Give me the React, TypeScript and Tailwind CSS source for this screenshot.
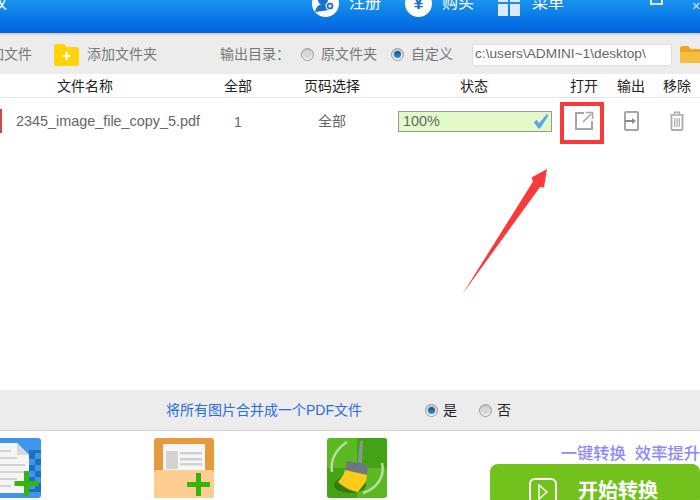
import React from 'react';

const FONT = 'font-["Liberation_Sans","Noto_Sans_CJK_SC",sans-serif]';

const Radio = ({ on }: { on?: boolean }) => (
  <span className="flex h-[13px] w-[13px] shrink-0 items-center justify-center rounded-full border border-[#9a9a9a] bg-gradient-to-b from-[#c4c4c4] to-[#f4f4f4]">
    {on ? <span className="h-[7px] w-[7px] rounded-full bg-gradient-to-b from-[#0d4f8c] to-[#2b9ad6]" /> : <span className="h-[7px] w-[7px] rounded-full bg-[#d6d6d6]" />}
  </span>
);

const TopItem = ({ icon, label }: { icon: React.ReactNode; label: string }) => (
  <div className="flex items-center gap-[10px]">
    {icon}
    <span className="text-[16px] leading-none text-white">{label}</span>
  </div>
);

const Circle = ({ children }: { children: React.ReactNode }) => (
  <span className="flex h-[27px] w-[27px] items-center justify-center rounded-full bg-white">{children}</span>
);

const OpenIcon = () => (
  <svg width="20" height="20" viewBox="0 0 20 20" fill="none" stroke="#a5a5a5" strokeWidth="2">
    <path d="M10 2H2v16h16v-8" />
    <path d="M9 11l8-8" strokeWidth="1.6" />
    <path d="M12 1.5h6.5V8" strokeWidth="1.6" />
  </svg>
);

const OutputIcon = () => (
  <svg width="15" height="20" viewBox="0 0 15 20" fill="none" stroke="#a5a5a5" strokeWidth="2">
    <rect x="1" y="1" width="13" height="18" rx="1" />
    <path d="M1 10h8" strokeWidth="2" stroke="#8a8a8a" />
    <path d="M8 7l4 3-4 3z" fill="#8a8a8a" stroke="none" />
  </svg>
);

const TrashIcon = () => (
  <svg width="16" height="20" viewBox="0 0 16 20" fill="none" stroke="#ababab" strokeWidth="1.5">
    <path d="M1 4h14M5.5 3.5V1.2h5v2.3" />
    <path d="M2.5 4.500v13.200c0 .8.5 1.300 1.300 1.300h8.400c.8 0 1.300-.5 1.300-1.300V4.500" strokeWidth="1.8" />
    <path d="M5.700 7v9M8 7v9M10.300 7v9" strokeWidth="1.200" />
  </svg>
);

const AddFileTile = () => (
  <svg width="60" height="60" viewBox="0 0 60 60" className="shrink-0">
    <rect width="60" height="60" rx="3" fill="#3f95ea" />
    <path d="M48 12h12v42H48z" fill="#1f6fc0" />
    <path d="M54 15h6v6h-6zM48 21h6v6h-6zM54 27h6v6h-6zM48 33h6v6h-6zM54 39h6v6h-6zM48 45h6v6h-6z" fill="#3f95ea" />
    <path d="M0 5h36l12 12v38H0z" fill="#f5f5f5" />
    <path d="M36 5l12 12H36z" fill="#d8d8d8" />
    <path d="M0 12h30v2H0zM0 19h36v2H0zM0 26h44v2H0zM0 33h44v2H0zM0 40h36v2H0zM0 47h30v2H0z" fill="#d2d2d2" />
    <path d="M33.500 43H43V33h5v10h9.500v5H48v10h-5V48h-9.500z" fill="#35b40a" />
  </svg>
);

const AddFolderTile = () => (
  <svg width="60" height="60" viewBox="0 0 60 60" className="shrink-0">
    <rect width="60" height="60" rx="3" fill="#e59a3d" />
    <rect x="9" y="6" width="42" height="30" fill="#f6f6f6" />
    <rect x="12" y="13" width="12" height="18" fill="#d2d2d2" />
    <path d="M26 14h22v2.500H26zM26 20h22v2.500H26zM26 25h22v2.500H26z" fill="#cfcfcf" />
    <path d="M0 35c0-2 1-3 3-3h54c2 0 3 1 3 3v22c0 2-1 3-3 3H3c-2 0-3-1-3-3z" fill="#fdcd92" />
    <path d="M33 44h9V35h5v9h9v5h-9v9h-5v-9h-9z" fill="#35b40a" />
  </svg>
);

const CleanTile = () => (
  <svg width="60" height="60" viewBox="0 0 60 60" className="shrink-0">
    <rect width="60" height="60" rx="3" fill="#5ab820" />
    <path d="M30 0h27c2 0 3 1 3 3v27H30z" fill="#44a315" />
    <path d="M0 30h30v30H3c-2 0-3-1-3-3z" fill="#44a315" />
    <path d="M20 4C9 11 3 22 5 34" stroke="#b9dca0" strokeWidth="2.500" fill="none" />
    <path d="M55 25c3 13-4 25-19 30" stroke="#b9dca0" strokeWidth="2.500" fill="none" />
    <ellipse cx="23" cy="47" rx="16" ry="8" fill="#357a12" />
    <path d="M33 4c1-2 3-2 3 0l-1 21-4-1z" fill="#8a93a0" />
    <path d="M20 23l21 4-1 10-22-5z" fill="#6f7680" />
    <path d="M18 32l22 5c0 3-1 6-2 8l-7 9c-7-1-15-5-20-10 3-3 6-7 7-12z" fill="#fbcb1c" />
  </svg>
);

export default function App() {
  return (
    <div className={`relative flex h-[500px] w-[700px] flex-col overflow-hidden bg-white ${FONT}`}>
      {/* title bar, top is cut off in the shot */}
      <div className="relative flex h-[33px] shrink-0 items-center justify-between overflow-hidden bg-gradient-to-b from-[#1a94ee] to-[#0560e0] pb-[27px]">
        <span className="ml-[-9px] text-[16px] leading-none text-white">权</span>
        <div className="mr-[136px] flex items-center gap-[24px]">
          <TopItem
            label="注册"
            icon={
              <Circle>
                <svg width="22" height="22" viewBox="0 0 22 22">
                  <circle cx="9" cy="8" r="5" fill="#1b6fd0" />
                  <path d="M1 20c1-6 5-8 8-8s6 2 7 6z" fill="#1b6fd0" />
                  <circle cx="16" cy="14" r="4" fill="#1b6fd0" stroke="#fff" />
                  <path d="M14 14h4M16 12v4" stroke="#fff" />
                </svg>
              </Circle>
            }
          />
          <TopItem
            label="购买"
            icon={
              <Circle>
                <span className="text-[18px] font-bold leading-none text-[#1b6fd0]">¥</span>
              </Circle>
            }
          />
          <TopItem
            label="菜单"
            icon={
              <span className="mr-[2px] grid h-[26px] w-[22px] grid-cols-2 gap-[2px]">
                <span className="bg-[#dce9fa]" />
                <span className="bg-[#dce9fa]" />
                <span className="bg-[#dce9fa]" />
                <span className="bg-[#dce9fa]" />
              </span>
            }
          />
        </div>
        <span className="absolute left-[650px] top-[-8px] h-[13px] w-[13px] border-2 border-[#dce9fa]" />
        <span className="absolute left-[692px] top-[-1px] text-[14px] leading-none text-[#dce9fa]">×</span>
      </div>
      <div className="h-[2px] shrink-0 bg-[#d6d6d6]" />

      {/* toolbar */}
      <div className="flex h-[39px] shrink-0 items-center bg-[#ececec] text-[14px] text-[#777]">
        <span className="ml-[-10px] w-[64px] shrink-0 whitespace-nowrap">加文件</span>
        <svg width="25" height="22" viewBox="0 0 25 22" className="shrink-0">
          <path d="M0 2c0-1 1-2 2-2h8l3 3h10c1 0 2 1 2 2v15c0 1-1 2-2 2H2c-1 0-2-1-2-2z" fill="#ffd30a" />
          <path d="M12.500 8v8M8.500 12h8" stroke="#fff" strokeWidth="2" />
        </svg>
        <span className="ml-[8px] w-[133px] shrink-0">添加文件夹</span>
        <span className="w-[81px] shrink-0">输出目录：</span>
        <Radio />
        <span className="ml-[7px] w-[70px] shrink-0">原文件夹</span>
        <Radio on />
        <span className="ml-[7px] w-[61px] shrink-0">自定义</span>
        <div className="flex h-[22px] w-[200px] shrink-0 items-center rounded-[2px] border border-[#dedede] bg-white pl-[2px] text-[13.700px] text-[#666]">
          c:\users\ADMINI~1\desktop\
        </div>
        <svg width="24" height="17" viewBox="0 0 24 17" className="ml-[8px] shrink-0">
          <path d="M0 2c0-1 1-2 2-2h6l3 3h13v14H0z" fill="#eda51f" />
          <path d="M0 6h24v11H0z" fill="#f6bd3f" />
        </svg>
      </div>

      {/* table header */}
      <div className="grid h-[23px] shrink-0 grid-cols-[196px_84px_104px_176px_48px_46px_46px] items-center text-center text-[14px] leading-none text-[#222]">
        <span className="pr-[26px]">文件名称</span>
        <span>全部</span>
        <span>页码选择</span>
        <span className="pl-[4px]">状态</span>
        <span>打开</span>
        <span>输出</span>
        <span>移除</span>
      </div>
      <div className="h-[1px] shrink-0 bg-[#e6e6e6]" />

      {/* file row */}
      <div className="grid h-[46px] shrink-0 grid-cols-[196px_84px_104px_176px_48px_46px_46px] items-center text-center text-[14px] text-[#666]">
        <div className="flex h-[24px] items-center">
          <span className="h-[24px] w-[2px] shrink-0 bg-[#d04a4a]" />
          <span className="ml-[14px] mt-[2px] whitespace-nowrap text-[14.400px]">2345_image_file_copy_5.pdf</span>
        </div>
        <span className="mt-[2px]">1</span>
        <span className="mt-[1px]">全部</span>
        <div className="ml-[14px] flex h-[21px] w-[154px] items-center justify-between border border-[#999] bg-[#e2fac8] pl-[4px] pr-[2px]">
          <span className="mt-[1px] text-[14.400px]">100%</span>
          <svg width="16" height="16" viewBox="0 0 18 17">
            <path d="M1 10l3-3 3 4L16 0l1 3-9 14h-2z" fill="#5aa4f2" />
          </svg>
        </div>
        <span className="flex justify-center"><OpenIcon /></span>
        <span className="flex justify-center"><OutputIcon /></span>
        <span className="flex justify-center"><TrashIcon /></span>
      </div>

      <div className="flex-1" />

      {/* merge option */}
      <div className="flex h-[40px] shrink-0 items-center bg-[#ececec] text-[14px]">
        <span className="ml-[166px] w-[259px] text-[#2a6be0]">将所有图片合并成一个PDF文件</span>
        <Radio on />
        <span className="ml-[5px] w-[36px] text-[#222]">是</span>
        <Radio />
        <span className="ml-[5px] text-[#222]">否</span>
      </div>
      <div className="h-[1px] shrink-0 bg-[#d2d2d2]" />

      {/* bottom actions */}
      <div className="flex h-[69px] shrink-0 overflow-hidden">
        <div className="ml-[-19px] mt-[7px] flex gap-[113px]">
          <AddFileTile />
          <AddFolderTile />
          <CleanTile />
        </div>
        <div className="ml-[103px] flex w-[210px] shrink-0 flex-col items-end">
          <div className="mt-[14px] whitespace-nowrap text-[16.300px] font-medium leading-none text-[#8c88ff]">一键转换&nbsp;&nbsp;效率提升</div>
          <div className="mt-[3px] flex h-[50px] w-[210px] items-start gap-[21px] rounded-[8px] bg-[#72c11d] pl-[39px] pt-[14px]">
            <span className="flex h-[28px] w-[28px] items-center justify-center rounded-[6px] border-2 border-white">
              <svg width="12" height="16" viewBox="0 0 12 16" fill="none" stroke="#fff" strokeWidth="1.500">
                <path d="M2 1l8 7-8 7z" />
              </svg>
            </span>
            <span className="text-[20px] font-bold leading-[26px] text-white">开始转换</span>
          </div>
        </div>
      </div>

      {/* red annotation drawn over the shot */}
      <div className="absolute left-[560px] top-[102px] h-[42px] w-[44px] border-4 border-[#f93a3a]" />
      <svg width="100" height="135" viewBox="0 0 100 135" className="absolute left-[455px] top-[165px]">
        <path d="M92 4L76.500 12.500L78 16.500L7.500 129L85 22L89 22.500z" fill="#f93a3a" />
      </svg>
    </div>
  );
}
